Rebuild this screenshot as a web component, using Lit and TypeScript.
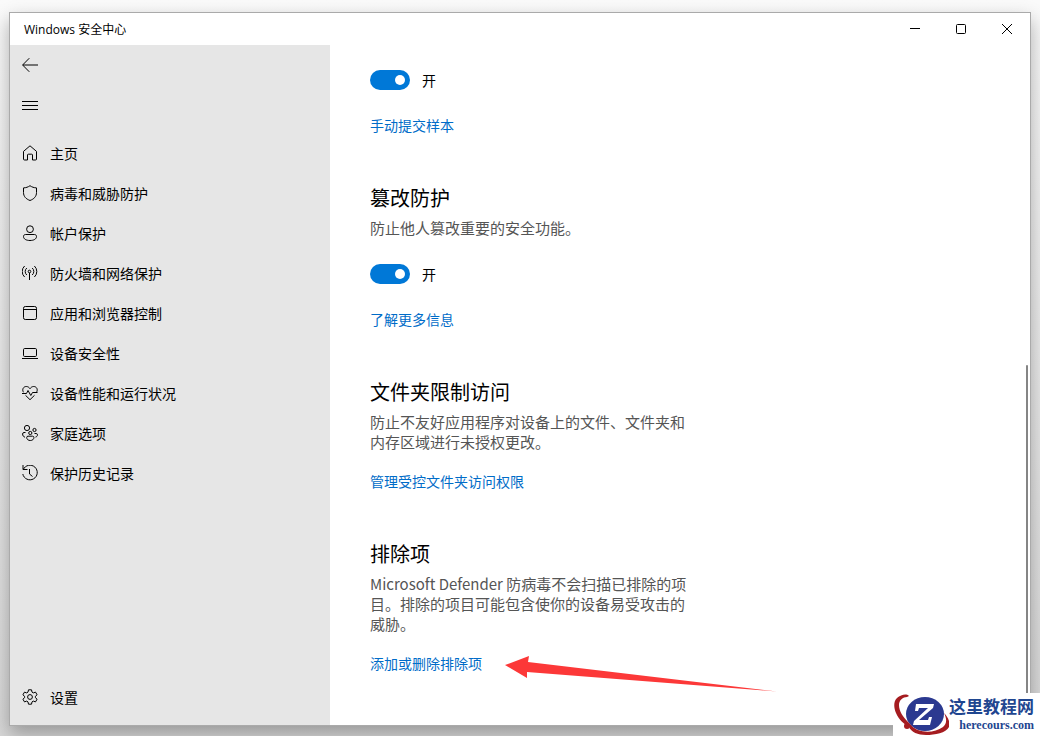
import { LitElement, html, css, svg } from "lit";
import { customElement, state } from "lit/decorators.js";

const icons = {
  back: svg`<path d="M16 8H.8M7.3 1.2.6 8l6.7 6.8"/>`,
  menu: svg`<path d="M0 4.500h16M0 8.500h16M0 12.500h16"/>`,
  home: svg`<path d="M1.500 6.400 8 .8l6.500 5.600V14a1 1 0 0 1-1 1h-3V10a.8.8 0 0 0-.8-.8H6.300a.8.8 0 0 0-.8.8v5h-3a1 1 0 0 1-1-1z"/>`,
  shield: svg`<path d="M8 .7C9.800 2 12 2.800 14.500 2.900V7.500c0 4-2.500 6.500-6.500 8-4-1.500-6.500-4-6.500-8V2.900C4 2.800 6.200 2 8 .7z"/>`,
  account: svg`<circle cx="8" cy="4.200" r="3.400"/><path d="M3.500 9.500h9c1.200 0 2 .8 2 2 0 2.500-2.700 4-6.500 4s-6.500-1.500-6.500-4c0-1.200.8-2 2-2z"/>`,
  network: svg`<circle cx="7.500" cy="6.500" r="1.300"/><path d="M7.500 7.800V15M4.800 10a4.600 4.600 0 0 1 0-7M10.200 3a4.600 4.600 0 0 1 0 7M2.600 12a7.500 7.500 0 0 1 0-11M12.400 1a7.500 7.500 0 0 1 0 11"/>`,
  app: svg`<rect x="1.500" y="1.500" width="13" height="13" rx="1.800"/><path d="M1.500 4.500h13"/>`,
  device: svg`<rect x="1.500" y="3.500" width="13" height="8" rx="1.200"/><path d="M0 13.500h16"/>`,
  health: svg`<path d="M1.500 7.300C-.3 4.500 1.400 1.500 4.300 1.500c1.600 0 2.900.9 3.700 2.200.8-1.300 2.100-2.200 3.700-2.200 2.900 0 4.600 3 2.800 5.800M0 8.500h4.500L6 5.500l2.800 5 1.700-3h5M3.500 10.300 8 14.700l4.500-4.400"/>`,
  family: svg`<circle cx="5" cy="3" r="2.600"/><circle cx="12.500" cy="5" r="1.600"/><circle cx="8.300" cy="8" r="1.600"/><path d="M3.500 7.500H2A1.500 1.500 0 0 0 .6 9c0 1.600.9 2.800 2.400 3.200M12.500 8.500h1.700c.8 0 1.300.6 1.300 1.300 0 1.200-.8 2-2 2.300M6 11.200h4.600c.8 0 1.300.5 1.300 1.300 0 1.800-1.500 3-3.600 3s-3.600-1.200-3.600-3c0-.8.5-1.300 1.300-1.300z"/>`,
  history: svg`<path d="M1 0v4.500h4.500M1.300 4.500A7.300 7.300 0 1 1 .8 9M7.500 4v5l3 2.500"/>`,
  settings: svg`<circle cx="8" cy="8" r="2.400"/><path stroke-linejoin="round" d="M6.500.8h3l.5 2.300 1.300.8 2.200-.8 1.600 2.700-1.700 1.500v1.400l1.700 1.500-1.600 2.700-2.200-.8-1.300.8-.5 2.300h-3L6 12.900l-1.300-.8-2.200.8L.9 10.200l1.700-1.500V7.300L.9 5.800l1.600-2.700 2.200.8L6 3.100z"/>`,
  minimize: svg`<path d="M3 7.500h10"/>`,
  maximize: svg`<rect x="3.500" y="3.500" width="9" height="9" rx="1"/>`,
  close: svg`<path d="m3 3 10 10M13 3 3 13"/>`,
};

type IconName = keyof typeof icons;

const icon = (name: IconName) =>
  html`<svg class="icon" viewBox="0 0 16 16" aria-hidden="true">${icons[name]}</svg>`;

const navItems: { icon: IconName; label: string }[] = [
  { icon: "home", label: "主页" },
  { icon: "shield", label: "病毒和威胁防护" },
  { icon: "account", label: "帐户保护" },
  { icon: "network", label: "防火墙和网络保护" },
  { icon: "app", label: "应用和浏览器控制" },
  { icon: "device", label: "设备安全性" },
  { icon: "health", label: "设备性能和运行状况" },
  { icon: "family", label: "家庭选项" },
  { icon: "history", label: "保护历史记录" },
];

@customElement("toggle-switch")
class ToggleSwitch extends LitElement {
  @state() private on = true;

  static styles = css`
    :host { display: flex; }
    .toggle { display: flex; align-items: center; gap: 12px; height: 20px; font-size: 14px; }
    .box {
      appearance: none; box-sizing: border-box; display: flex; align-items: center;
      justify-content: flex-start; width: 40px; height: 20px; margin: 0; padding: 0 5px;
      border-radius: 10px; background: #767676;
    }
    .box:checked { justify-content: flex-end; background: #0078d7; }
    .box::before { content: ""; width: 10px; height: 10px; border-radius: 50%; background: #fff; }
  `;

  render() {
    return html`<label class="toggle">
      <input class="box" type="checkbox" role="switch" .checked=${this.on}
        @change=${(e: Event) => (this.on = (e.target as HTMLInputElement).checked)} />
      <span>${this.on ? "开" : "关"}</span>
    </label>`;
  }
}

@customElement("app-root")
class AppRoot extends LitElement {
  static styles = css`
    :host {
      position: relative; display: flex; box-sizing: border-box; min-height: 100vh;
      padding: 12px 9px 10px; overflow: hidden; color: #000;
      background: linear-gradient(#fafafa, #d8d8d8);
      font-family: "Open Sans", "Noto Sans CJK SC", sans-serif;
    }
    .window {
      flex: 1; display: flex; flex-direction: column; min-width: 0;
      border: 1px solid #aaa; background: #fff; box-shadow: 0 8px 18px rgba(0, 0, 0, 0.3);
    }
    .titlebar { display: flex; align-items: center; justify-content: space-between; height: 32px; padding-left: 14px; }
    .title { margin: 0; padding-top: 2px; font-size: 12px; font-weight: 400; line-height: 20px; }
    .controls { display: flex; }
    button { border: 0; padding: 0; background: none; color: inherit; font: inherit; }
    .control { display: grid; place-items: center; width: 46px; height: 32px; }
    .icon { width: 16px; height: 16px; flex: none; fill: none; stroke: currentColor; stroke-width: 1; }
    .body { flex: 1; display: flex; }
    .sidebar { display: flex; flex-direction: column; width: 320px; box-sizing: border-box; padding-bottom: 8px; background: #e6e6e6; }
    .item {
      display: flex; align-items: center; gap: 12px; height: 40px; padding: 0 12px;
      color: inherit; font-size: 14px; line-height: 20px; text-decoration: none;
    }
    .label { padding-top: 2px; }
    .nav { flex: 1; margin-top: 8px; }
    .content { flex: 1; padding: 25px 40px 0; }
    .section { margin-bottom: 49px; }
    .heading { margin: 0 0 5px; font-size: 20px; font-weight: 400; line-height: 28px; }
    .text { max-width: 320px; margin: 0; color: #555; font-family: "Noto Sans CJK SC", sans-serif; font-size: 15px; line-height: 20px; }
    .text + toggle-switch { margin-top: 26px; }
    .links { display: flex; margin-top: 20px; font-size: 14px; line-height: 20px; }
    toggle-switch + .links { margin-top: 26px; }
    .link { position: relative; color: #006cc8; text-decoration: none; }
    .arrow { position: absolute; top: 1px; left: 100%; width: 272px; height: 38px; margin-left: 23px; fill: #fc3838; }
    .thumb { align-self: flex-end; width: 2px; height: 53%; margin-right: 2px; border-radius: 1px; background: #858585; }
    .brand {
      position: absolute; right: 0; bottom: 0; display: flex; align-items: center;
      width: 147px; height: 43px; background: #fff; color: #1f4690;
    }
    .emblem { width: 56px; height: 43px; flex: none; }
    .names { display: flex; flex-direction: column; align-items: flex-end; }
    .name { font-size: 17px; font-weight: 700; line-height: 20px; }
    .site { font-family: "Liberation Serif", serif; font-size: 12px; font-weight: 700; line-height: 16px; }
  `;

  render() {
    return html`
      <div class="window">
        <header class="titlebar">
          <h1 class="title">Windows 安全中心</h1>
          <div class="controls">
            <button class="control" aria-label="最小化">${icon("minimize")}</button>
            <button class="control" aria-label="最大化">${icon("maximize")}</button>
            <button class="control" aria-label="关闭">${icon("close")}</button>
          </div>
        </header>
        <div class="body">
          <aside class="sidebar">
            <button class="item" aria-label="返回">${icon("back")}</button>
            <button class="item" aria-label="菜单">${icon("menu")}</button>
            <nav class="nav">
              ${navItems.map((n) => html`<a class="item" href="#">${icon(n.icon)}<span class="label">${n.label}</span></a>`)}
            </nav>
            <a class="item" href="#">${icon("settings")}<span class="label">设置</span></a>
          </aside>
          <main class="content">
            <section class="section">
              <toggle-switch></toggle-switch>
              <div class="links"><a class="link" href="#">手动提交样本</a></div>
            </section>
            <section class="section">
              <h2 class="heading">篡改防护</h2>
              <p class="text">防止他人篡改重要的安全功能。</p>
              <toggle-switch></toggle-switch>
              <div class="links"><a class="link" href="#">了解更多信息</a></div>
            </section>
            <section class="section">
              <h2 class="heading">文件夹限制访问</h2>
              <p class="text">防止不友好应用程序对设备上的文件、文件夹和内存区域进行未授权更改。</p>
              <div class="links"><a class="link" href="#">管理受控文件夹访问权限</a></div>
            </section>
            <section>
              <h2 class="heading">排除项</h2>
              <p class="text">Microsoft Defender 防病毒不会扫描已排除的项目。排除的项目可能包含使你的设备易受攻击的威胁。</p>
              <div class="links">
                <a class="link" href="#">添加或删除排除项
                  <svg class="arrow" viewBox="0 0 272 38" aria-hidden="true"><path d="M0 10 24 1 23 7 272 36.500 22 17 22 23z"/></svg></a>
              </div>
            </section>
          </main>
          <div class="thumb"></div>
        </div>
      </div>
      <div class="brand">
        <svg class="emblem" viewBox="0 0 56 43" aria-hidden="true">
          <ellipse cx="32" cy="21" rx="19" ry="17" fill="#2b3990"/>
          <path d="M16 3C13 0 8 2 4 5 0 9 1 15 3 20c3 7 8 11 13 14 2 5 9 8 17 8 9 0 20-2 23-8 2-5-2-11-5-14 3 6 3 11-1 14-7 5-17 6-25 3-5-2-7-5-10-8C10 24 6 18 6 12c0-5 4-8 8-8z" fill="#a51c20"/>
          <circle cx="14" cy="33" r="3" fill="#a51c20"/>
          <path d="M23 11h18l-1 4-14 12h9l1-3h3l-2 8H20l1-4 14-13h-9l-1 3h-3z" fill="#fff"/>
        </svg>
        <div class="names"><span class="name">这里教程网</span><span class="site">herecours.com</span></div>
      </div>
    `;
  }
}
